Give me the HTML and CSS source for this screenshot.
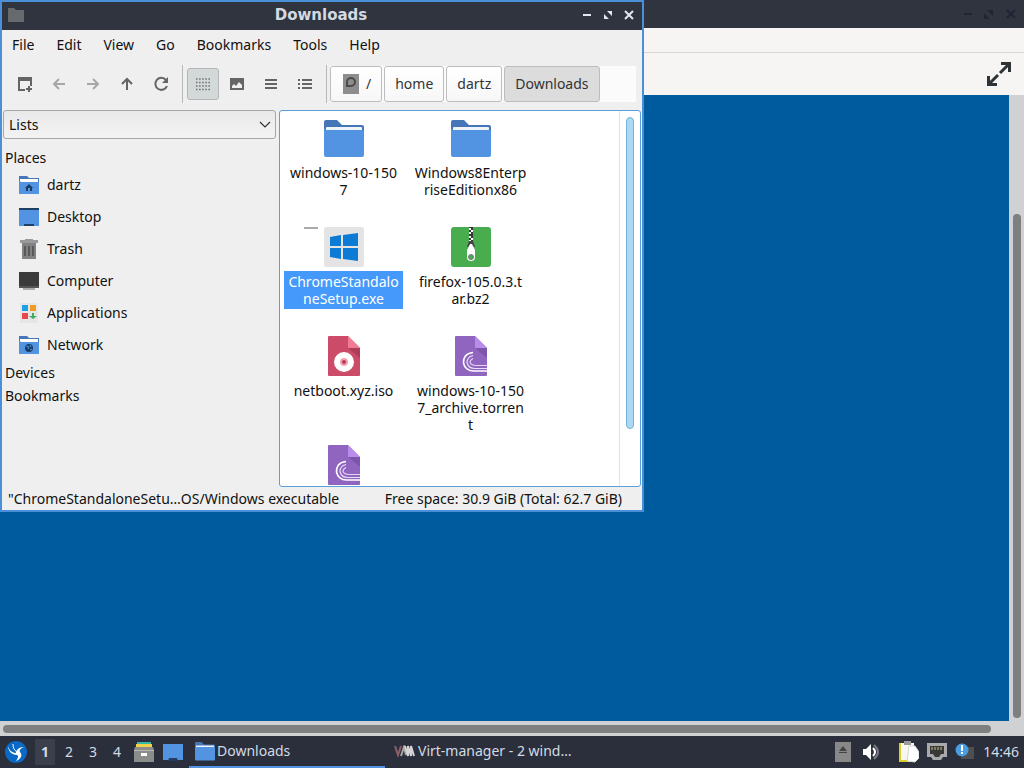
FILE: index.html
```html
<!DOCTYPE html>
<html lang="en">
<head>
    <meta charset="UTF-8">
    <title>Downloads</title>
    <link rel="stylesheet" href="styles.css">
</head>
<body>
<!-- shared icons -->
<svg class="defs" width="0" height="0">
    <symbol id="folder" viewBox="0 0 40 40">
        <path d="M0 4q0-2 2-2h11l5 5h20q2 0 2 2v10H0z" fill="#4577b8"/>
        <path d="M2 10q0-1 1-1h34q1 0 1 1v6H2z" fill="#eef3fa"/>
        <path d="M0 10l2 2h36q2 0 2 2v23q0 2-2 2H2q-2 0-2-2z" fill="#5294e2"/>
    </symbol>
    <symbol id="torrent" viewBox="0 0 40 40">
        <path d="M4 1q0-1 1-1h19l12 12v27q0 1-1 1H5q-1 0-1-1z" fill="#9065c0"/>
        <path d="M24 0l12 12H24z" fill="#b98bea"/>
        <path d="M24 12h12v10z" fill="#7d56a9"/>
        <g fill="none" stroke="#fff" stroke-width="1.6">
            <path d="M22 16.500C15 17 12 22 12.500 27c1 5 5 8 10 8H36"/>
            <path d="M22 19.500c-4 1-6 4-6 7 1 4 4 6 8 6h12" stroke="#eadcf8" stroke-width="1.2"/>
            <path d="M22 22.500c-2 1-3 2-3 4 1 2 3 3 6 3h11" stroke="#e4d4f6" stroke-width="1.2"/>
        </g>
    </symbol>
    <symbol id="winbuttons" viewBox="0 0 56 16">
        <path d="M4 7h8v2H4z"/>
        <path d="M27 4h6v6zM24 7v6h6z"/>
        <path d="M47 4l8 8M55 4l-8 8" stroke="currentColor" stroke-width="2.2"/>
    </symbol>
</svg>

<div class="screen">
    <div class="viewer">
        <div class="viewer-title">
            <svg class="dim" width="56" height="16" fill="currentColor"><use href="#winbuttons"/></svg>
        </div>
        <div class="viewer-menu"></div>
        <div class="viewer-tools">
            <button class="expand" aria-label="Full screen">
                <svg width="26" height="26" viewBox="0 0 26 26" fill="none" stroke="#2e3436" stroke-width="3">
                    <path d="M14 12l9-9M15 2.500h8.500V11M12 14l-9 9M2.500 15v8.500H11"/>
                </svg>
            </button>
        </div>
        <div class="viewer-body">
            <div class="display"></div>
            <div class="vbar"><div class="thumb"></div></div>
        </div>
        <div class="hbar"><div class="thumb"></div></div>
    </div>

    <div class="window">
        <div class="titlebar">
            <svg width="16" height="16" viewBox="0 0 16 16"><path d="M0 1h6l2 2h8v12H0z" fill="#666a6d"/></svg>
            <h1>Downloads</h1>
            <div class="controls">
                <button aria-label="Minimize"><svg width="10" height="10"><path d="M1 4h8v2H1z" fill="#e3e7ee"/></svg></button>
                <button aria-label="Maximize"><svg width="10" height="10"><path d="M4 1h5v5zM1 4v5h5z" fill="#e3e7ee"/></svg></button>
                <button aria-label="Close"><svg width="10" height="10"><path d="M1 1l8 8M9 1L1 9" stroke="#e3e7ee" stroke-width="2"/></svg></button>
            </div>
        </div>
        <div class="menubar">
            <button>File</button>
            <button>Edit</button>
            <button>View</button>
            <button>Go</button>
            <button>Bookmarks</button>
            <button>Tools</button>
            <button>Help</button>
        </div>
        <div class="toolbar">
            <button aria-label="New tab"><svg width="16" height="16"><path d="M1 1h14v9h-2V5H3v8h5v2H1z" fill="#656565"/><path d="M12 10v6M9 13h6" stroke="#656565" stroke-width="2"/></svg></button>
            <button aria-label="Back"><svg width="16" height="16" fill="none" stroke="#a6a6a6" stroke-width="2"><path d="M14 8H4M8 3L3 8l5 5"/></svg></button>
            <button aria-label="Forward"><svg width="16" height="16" fill="none" stroke="#a6a6a6" stroke-width="2"><path d="M2 8h10M8 3l5 5-5 5"/></svg></button>
            <button aria-label="Up"><svg width="16" height="16" fill="none" stroke="#656565" stroke-width="2"><path d="M8 14V4M3 8l5-5 5 5"/></svg></button>
            <button aria-label="Reload"><svg width="16" height="16" fill="none" stroke="#656565" stroke-width="2"><path d="M13 4a6 6 0 1 0 1 6"/><path d="M15 1v6H9z" fill="#656565" stroke="none"/></svg></button>
            <span class="sep"></span>
            <button class="on" aria-label="Icon view"><svg width="16" height="16"><path d="M1 3h14M1 6.500h14M1 10h14M1 13.500h14" stroke="#707070" stroke-width="1.500" stroke-dasharray="1.500 1.600"/></svg></button>
            <button aria-label="Thumbnail view"><svg width="16" height="16"><path d="M1 2h14v12H1zM3 12h10V9l-3-3-3 4-2-2-2 2z" fill="#656565" fill-rule="evenodd"/></svg></button>
            <button aria-label="Compact view"><svg width="16" height="16"><path d="M2 4h12M2 8h12M2 12h12" stroke="#656565" stroke-width="2"/></svg></button>
            <button aria-label="Detailed list"><svg width="16" height="16"><path d="M1 4h2M1 8h2M1 12h2M5 4h10M5 8h10M5 12h10" stroke="#656565" stroke-width="2"/></svg></button>
            <span class="sep"></span>
            <div class="path">
                <button class="root"><svg width="16" height="20"><path d="M0 0h16v20H0z" fill="#8d8d8d"/><path d="M4 12V8a4 4 0 1 1 4 4z" fill="none" stroke="#4a4a4a" stroke-width="2"/></svg>/</button>
                <button>home</button>
                <button>dartz</button>
                <button class="here">Downloads</button>
            </div>
        </div>
        <div class="content">
            <div class="sidebar">
                <div class="combo">
                    <select aria-label="Side pane mode"><option>Lists</option></select>
                    <svg width="12" height="8" fill="none" stroke="#333" stroke-width="1.200"><path d="M1 1l5 5 5-5"/></svg>
                </div>
                <h2>Places</h2>
                <a href="#"><svg width="20" height="20"><path d="M0 1h8l2 2h10v6H0z" fill="#4577b8"/><path d="M1 4h18v4H1z" fill="#fff"/><path d="M0 5l2 2h18v12H0z" fill="#5294e2"/><path d="M10 9l4 4h-1v3h-2v-3H9v3H7v-3H6z" fill="#193d63"/></svg>dartz</a>
                <a href="#"><svg width="20" height="20"><path d="M0 1h20v18H0z" fill="#5294e2"/><path d="M0 1h20v2H0zM5 17h10v2H5z" fill="#1d4164"/></svg>Desktop</a>
                <a href="#"><svg width="20" height="20"><path d="M1 1h5V0h8v1h5v3H1z" fill="#999"/><path d="M3 4h14v16H3z" fill="#828282"/><path d="M6 7v10M10 7v10M14 7v10" stroke="#595959" stroke-width="2"/></svg>Trash</a>
                <a href="#"><svg width="20" height="20"><path d="M4 17h12v2H4z" fill="#aaa"/><path d="M0 1h20v16H0z" fill="#3b3b3b"/><path d="M0 15h20v2H0z" fill="#555"/></svg>Computer</a>
                <a href="#"><svg width="20" height="20"><path d="M1 0h18v20H1z" fill="#e6e6e6"/><path d="M3 2h6v6H3z" fill="#1ea0e6"/><path d="M11 2h6v6h-6z" fill="#f19b22"/><path d="M3 10h6v6H3z" fill="#e8484b"/><path d="M13 10h2v3h3l-4 3-4-3h3z" fill="#3cae56"/></svg>Applications</a>
                <a href="#"><svg width="20" height="20"><path d="M0 1h8l2 2h10v6H0z" fill="#4577b8"/><path d="M1 4h18v4H1z" fill="#fff"/><path d="M0 5l2 2h18v12H0z" fill="#5294e2"/><circle cx="10" cy="13" r="4" fill="#193d63"/><path d="M7 11l3 1-1 2M11 10l1 2M11 15l2-1" stroke="#5294e2" fill="none"/></svg>Network</a>
                <h2>Devices</h2>
                <h2>Bookmarks</h2>
            </div>
            <div class="pane">
                <ul class="files">
                    <li><svg width="40" height="40"><use href="#folder"/></svg><span>windows-10-150<br>7</span></li>
                    <li><svg width="40" height="40"><use href="#folder"/></svg><span>Windows8Enterp<br>riseEditionx86</span></li>
                    <li class="selected">
                        <i class="dash"></i>
                        <svg width="40" height="40"><rect width="40" height="40" rx="2" fill="#e4e4e4"/><path d="M6 10l11-2v11H6zM19 8l15-2v13H19zM6 21h11v11L6 30zM19 21h15v13l-15-2z" fill="#0b7bd6"/></svg>
                        <span>ChromeStandalo<br>neSetup.exe</span>
                    </li>
                    <li><svg width="40" height="40"><rect width="40" height="40" rx="3" fill="#49ad50"/><path d="M18 0h4v16h-4z" fill="#353535"/><path d="M18 1h2v2h2v2h-2v2h-2V5h2V3h-2zM18 9h2v2h2v2h-2v2h-2v-2h2v-2h-2z" fill="#fff"/><path d="M18 14h4l2 6H16z" fill="#444"/><path d="M18 19l1-2h2l1 2 2 4v7q0 4-4 4t-4-4v-7z" fill="#fff"/><circle cx="20" cy="30" r="2.500" fill="#49ad50" stroke="#777"/></svg><span>firefox-105.0.3.t<br>ar.bz2</span></li>
                    <li><svg width="40" height="40"><path d="M4 1q0-1 1-1h19l12 12v27q0 1-1 1H5q-1 0-1-1z" fill="#cb4b68"/><path d="M24 0l12 12H24z" fill="#f27b94"/><path d="M24 12h12v10z" fill="#ae3d57"/><circle cx="20" cy="26" r="10" fill="#fff"/><circle cx="20" cy="26" r="4" fill="#f0a4b3"/><circle cx="20" cy="26" r="2" fill="#b93d5a"/></svg><span>netboot.xyz.iso</span></li>
                    <li><svg width="40" height="40"><use href="#torrent"/></svg><span>windows-10-150<br>7_archive.torren<br>t</span></li>
                    <li><svg width="40" height="40"><use href="#torrent"/></svg></li>
                </ul>
                <div class="scroll"><div class="thumb"></div></div>
            </div>
        </div>
        <div class="status">
            <span>"ChromeStandaloneSetu…OS/Windows executable</span>
            <span>Free space: 30.9 GiB (Total: 62.7 GiB)</span>
        </div>
    </div>

    <div class="panel">
        <button class="launch" aria-label="Menu"><svg width="22" height="22"><circle cx="11" cy="11" r="11" fill="#0b68c4"/><path d="M3 5c1 4 4 7 8 7 0-3 3-6 8-6-3 1-5 3-4 5 3 3 1 7-4 9 2-3 3-5 1-6-5 0-9-4-9-9z" fill="#fff"/><path d="M8 3c0 4 1 6 4 8" fill="none" stroke="#fff"/></svg></button>
        <div class="spaces">
            <button class="current">1</button>
            <button>2</button>
            <button>3</button>
            <button>4</button>
        </div>
        <button class="launch" aria-label="File manager"><svg width="20" height="20"><path d="M3 0h14v3H3z" fill="#35b8a5"/><path d="M2 2h16v4H2z" fill="#f4d04f"/><path d="M1 5h18l1 3v12H0V8z" fill="#8a8d89"/><path d="M0 8h20v1H0z" fill="#b5b7b3"/><path d="M7 11h6v3H7z" fill="#fff"/></svg></button>
        <button class="launch" aria-label="Show desktop"><svg width="20" height="18"><path d="M0 1h20v16H0z" fill="#5294e2"/><path d="M5 18l1-3h8l1 3z" fill="#263c60"/></svg></button>
        <div class="tasks">
            <button class="active"><svg width="20" height="20"><use href="#folder"/></svg>Downloads</button>
            <button><svg width="22" height="12" fill="none" stroke-width="2"><path d="M1 1l3 9 3-9" stroke="#8e5d68"/><path d="M7 11l3-9 2 8" stroke="#a7a7a7"/><path d="M11 1l3 10V1l3 10V1l3 10" stroke="#d5d5d5"/></svg>Virt-manager - 2 wind…</button>
        </div>
        <div class="tray">
            <button aria-label="Removable media"><svg width="16" height="20"><path d="M0 0h16v20H0z" fill="#888"/><path d="M8 4l4 5H4zM4 10h8v1H4z" fill="#444"/></svg></button>
            <button aria-label="Volume"><svg width="16" height="16"><path d="M0 5h3l5-5v16l-5-5H0z" fill="#fff"/><path d="M10 4q4 4 0 8" fill="none" stroke="#fff" stroke-width="2"/><path d="M11 1q8 7 0 14" fill="none" stroke="#777b84" stroke-width="2"/></svg></button>
            <button aria-label="Clipboard"><svg width="20" height="22"><path d="M1 2h14v19H1z" fill="#f7f7f2"/><path d="M1 2v18h9" fill="none" stroke="#d8ce2c" stroke-width="2"/><path d="M5 0h7v4H5z" fill="#999"/><path d="M10 5h6l4 6v6l-4 4-8-1z" fill="#fff" stroke="#d6d6d6"/></svg></button>
            <button aria-label="Network"><svg width="20" height="18"><path d="M0 0h20v14h-4l-2 3H6l-2-3H0z" fill="#a7a9aa"/><path d="M3 3h14v8h-3l-2 3H8l-2-3H3z" fill="#393a38"/><path d="M5 4v3M8 4v3M11 4v3M14 4v3" stroke="#c5ba8b"/></svg></button>
            <button aria-label="Updates"><svg width="20" height="18"><path d="M6 4h13v12H6z" fill="#4d4f50"/><circle cx="7" cy="7" r="6.500" fill="#4a9de2"/><path d="M6 2h2v6H6zM6 9h2v2H6z" fill="#fff"/></svg></button>
            <time>14:46</time>
        </div>
    </div>
</div>
</body>
</html>
```
FILE: styles.css
```css
*{box-sizing: border-box; margin: 0; padding: 0;}
html, body{height: 100%;}
body{
    font: 14px/20px "Noto Sans", sans-serif;
    color: #111;
    overflow: hidden;
}
button{
    border: 0;
    background: none;
    font: inherit;
    color: inherit;
}
svg{display: block; flex: none;}
.defs{position: absolute;}
.screen{
    position: relative;
    height: 100%;
    display: flex;
    flex-direction: column;
}

/* remote viewer behind */
.viewer{
    flex: 1;
    display: flex;
    flex-direction: column;
    background: #f6f5f4;
}
.viewer-title{
    height: 28px;
    background: #2f343f;
    display: flex;
    align-items: center;
    justify-content: flex-end;
    padding-right: 8px;
}
.dim{color: #1f2633;}
.viewer-menu{
    height: 25px;
    border-bottom: 1px solid #d8d6d4;
}
.viewer-tools{
    height: 42px;
    display: flex;
    align-items: center;
    justify-content: flex-end;
    padding-right: 12px;
}
.viewer-body{flex: 1; display: flex;}
.display{flex: 1; background: #005a9e;}
.vbar{
    width: 15px;
    background: #d0d1d2;
    padding: 119px 3px 3px 4px;
}
.vbar .thumb{height: 100%;}
.hbar{
    height: 15px;
    background: #d0d1d2;
    padding: 4px 33px 3px 3px;
}
.hbar .thumb{height: 8px;}
.vbar .thumb, .hbar .thumb{
    background: #7e8080;
    border-radius: 4px;
}

/* file manager window */
.window{
    position: absolute;
    top: 0;
    left: 0;
    right: 380px;
    bottom: 256px;
    border: 2px solid #4a90d9;
    background: #efefef;
    display: flex;
    flex-direction: column;
}
.titlebar{
    height: 28px;
    background: #2f343f;
    display: flex;
    align-items: center;
    padding: 0 8px 2px 6px;
}
.titlebar h1{
    flex: 1;
    padding-left: 36px;
    text-align: center;
    font: bold 15px/20px "DejaVu Sans", sans-serif;
    color: #d3dae3;
}
.controls{display: flex; gap: 11px;}
.menubar{
    height: 30px;
    display: flex;
    align-items: center;
    gap: 2px;
}
.menubar button{padding: 0 10px;}
.toolbar{
    height: 48px;
    display: flex;
    align-items: center;
    padding: 0 6px;
}
.toolbar > button{
    width: 32px;
    height: 32px;
    margin: 0 1px;
    display: flex;
    align-items: center;
    justify-content: center;
    border-radius: 3px;
}
.toolbar > .on{
    background: #d3d8d8;
    border: 1px solid #b2b6b6;
}
.sep{
    width: 1px;
    height: 38px;
    margin: 0 3px 0 4px;
    background: #b8b8b8;
}
.path{
    flex: 1;
    height: 36px;
    display: flex;
    gap: 2px;
    background: #fbfbfb;
}
.path button{
    padding: 0 10px;
    border: 1px solid #bdbdbd;
    border-radius: 3px;
    background: linear-gradient(#fff, #f7f7f7);
    color: #333;
}
.path .root{
    display: flex;
    align-items: center;
    gap: 7px;
    padding-left: 12px;
}
.path .here{background: #dcdcdc;}
.content{
    flex: 1;
    min-height: 0;
    display: flex;
    gap: 3px;
    padding: 2px 1px 0;
}
.sidebar{flex: 0 0 273px;}
.combo{
    display: grid;
    align-items: center;
    margin-bottom: 7px;
}
.combo select, .combo svg{grid-area: 1 / 1;}
.combo svg{
    justify-self: end;
    margin-right: 5px;
    pointer-events: none;
}
.combo select{
    appearance: none;
    height: 29px;
    padding: 0 5px;
    border: 1px solid #a8a8a8;
    border-radius: 3px;
    background: linear-gradient(#e9e9e9, #f3f3f3);
    font: inherit;
    color: inherit;
}
.sidebar h2{
    padding-left: 2px;
    font-size: 14px;
    font-weight: normal;
    line-height: 23px;
}
.sidebar a{
    height: 32px;
    padding-left: 16px;
    display: flex;
    align-items: center;
    gap: 8px;
    color: inherit;
    text-decoration: none;
}
.pane{
    flex: 1;
    display: flex;
    overflow: hidden;
    background: #fff;
    border: 1px solid #5b9fdc;
    border-radius: 3px;
}
.files{
    flex: 1;
    list-style: none;
    padding-top: 7px;
    display: grid;
    grid-template-columns: repeat(auto-fill, 127px);
    grid-auto-rows: 109px;
}
.files li{
    position: relative;
    padding: 0 4px;
    display: flex;
    flex-direction: column;
    align-items: center;
    gap: 4px;
}
.files span{
    width: 100%;
    padding: 2px 0;
    line-height: 17px;
    text-align: center;
    white-space: nowrap;
}
.selected span{background: #4499fb; color: #fff;}
.dash{
    position: absolute;
    left: 24px;
    top: 0;
    width: 14px;
    height: 2px;
    background: #aaa;
}
.scroll{
    width: 21px;
    border-left: 1px solid #e2e2e2;
    padding: 6px;
}
.scroll .thumb{
    width: 8px;
    height: 86%;
    background: #add8f3;
    border: 1px solid #74b4da;
    border-radius: 4px;
}
.status{
    height: 23px;
    display: flex;
    justify-content: space-between;
    align-items: center;
    padding: 0 20px 0 6px;
    white-space: nowrap;
}

/* bottom panel */
.panel{
    height: 32px;
    background: #2b2f3b;
    color: #d3dae3;
    display: flex;
    align-items: center;
    padding: 0 5px;
}
.spaces{
    display: flex;
    gap: 4px;
    margin: 0 7px 0 8px;
}
.spaces button{width: 20px; height: 26px;}
.spaces .current{background: #3a3f4b; font-weight: bold;}
.launch + .launch{margin-left: 9px;}
.tasks{
    flex: 1;
    display: flex;
    gap: 3px;
    margin-left: 6px;
}
.tasks button{
    width: 196px;
    height: 32px;
    padding: 0 6px;
    border-bottom: 2px solid transparent;
    display: flex;
    align-items: center;
    gap: 2px;
    white-space: nowrap;
}
.tasks .active{border-bottom-color: #5294e2;}
.tray{
    display: flex;
    align-items: center;
    gap: 8px;
}
.tray button:nth-child(2){margin: 0 12px 0 4px;}
```
